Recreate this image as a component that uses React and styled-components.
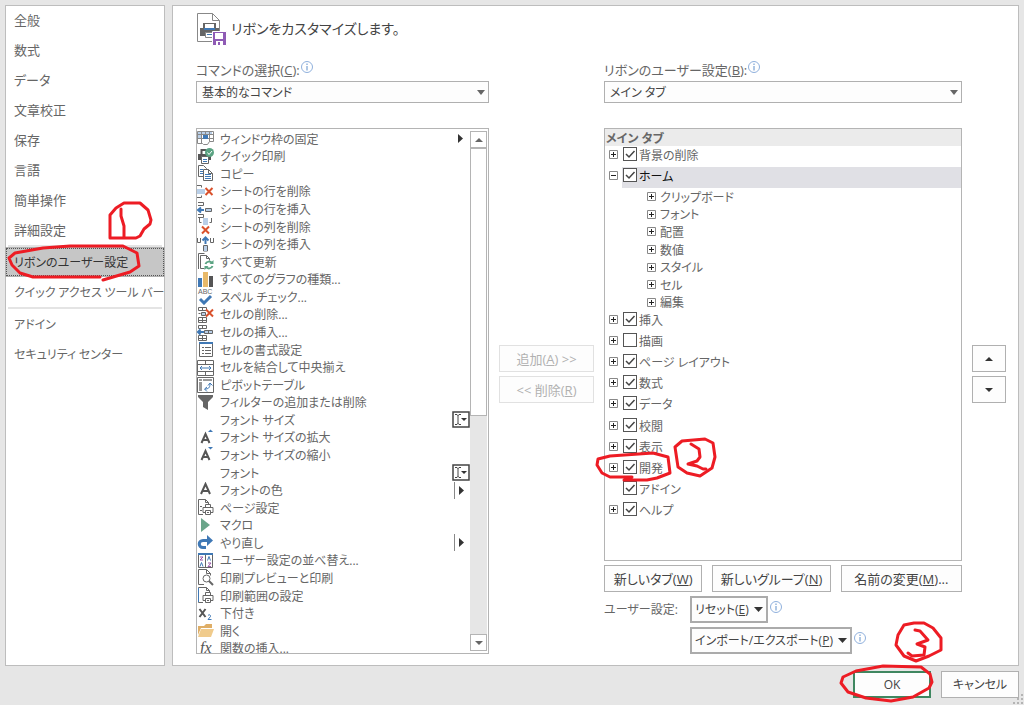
import React, { useState } from "react";
import styled, { createGlobalStyle, css } from "styled-components";

const GlobalStyle = createGlobalStyle`
  *, *::before, *::after { box-sizing: border-box; }
  body {
    margin: 0;
    background: #e6e6e6;
    font-family: "Open Sans", "Noto Sans CJK JP", sans-serif;
    font-feature-settings: "palt";
    font-size: 12px;
    line-height: 18px;
    color: #666;
  }
  button, input, select { font: inherit; font-feature-settings: inherit; color: inherit; margin: 0; }
  ul { list-style: none; margin: 0; padding: 0; }
`;

const Dialog = styled.div`
  position: relative;
  display: flex;
  flex-direction: column;
  min-height: 100vh;
  padding: 5px 5px 0;
  background: #e6e6e6;
`;
const Body = styled.div`
  display: flex;
  flex: 1;
  gap: 7px;
`;
const Nav = styled.nav`
  flex: none;
  width: 160px;
  background: #fff;
  box-shadow: inset 0 0 0 1px #bdbdbd;
  font-family: "Noto Sans CJK JP", sans-serif;
`;
const NavGroup = styled.div`
  font-size: ${(p) => (p.$main ? 13 : 12)}px;
`;
const NavItem = styled.button`
  display: block;
  width: 100%;
  height: 30px;
  padding: 0 0 0 9px;
  border: 0;
  background: none;
  text-align: left;
  white-space: nowrap;
  ${(p) => p.$active && css`
    background: #c6c6c6;
    color: #333;
    outline: 1px dotted #555;
    outline-offset: -2px;
    box-shadow: inset 0 0 0 1px #b0b0b0;
  `}
`;
const NavDivider = styled.hr`
  height: 2px;
  margin: 0 3px;
  border: 0;
  background: #e4e4e4;
`;
const Main = styled.main`
  flex: 1;
  min-width: 0;
  padding: 0 12px 11px 23px;
  border: 1px solid #bdbdbd;
  background: #fff;
`;
const Heading = styled.h1`
  display: flex;
  align-items: center;
  gap: 3px;
  height: 46px;
  margin: 0 0 6px;
  font-size: 14px;
  font-weight: 400;
  line-height: 24px;
  color: #444;
`;
const Columns = styled.div`
  display: grid;
  grid-template-columns: minmax(0, 293fr) 95px minmax(0, 358fr) 34px;
  gap: 10px;
`;
const Column = styled.section`
  display: flex;
  flex-direction: column;
`;
const ButtonStack = styled.div`
  display: flex;
  flex-direction: column;
  gap: 4px;
  padding-top: 287px;
`;
const FieldLabel = styled.div`
  display: flex;
  align-items: center;
  gap: 1px;
  height: 23px;
  font-size: 13px;
  white-space: nowrap;
  svg { margin-bottom: 6px; }
`;
const SelectBox = styled.div`
  display: grid;
  align-items: center;
  margin-bottom: 25px;
  select {
    grid-area: 1 / 1;
    appearance: none;
    width: 100%;
    height: 22px;
    padding: 2px 20px 0 5px;
    border: 1px solid #b0b0b0;
    border-radius: 0;
    background: #fdfdfd;
    color: #444;
  }
  svg { grid-area: 1 / 1; justify-self: end; margin-right: 4px; pointer-events: none; }
`;
const ListBox = styled.div`
  display: flex;
  height: 526px;
  border: 1px solid #b4b4b4;
  overflow: hidden;
`;
const CommandList = styled.ul`
  flex: 1;
  display: grid;
  grid-auto-rows: 1fr;
  height: 528px;
  padding-top: 1px;
`;
const CommandRow = styled.li`
  display: flex;
  align-items: center;
  gap: 6px;
  min-height: 0;
  white-space: nowrap;
  > svg { flex: none; }
`;
const CommandName = styled.span`
  flex: 1;
  padding-top: 2px;
  line-height: 16px;
`;
const ScrollBar = styled.div`
  display: flex;
  flex-direction: column;
  flex: none;
  width: 18px;
  padding: 2px 1px 2px 0;
`;
const ScrollTrack = styled.div`
  flex: 1;
  background: #e6e6e6;
`;
const ScrollThumb = styled.div`
  height: 268px;
  border: 1px solid #b4b4b4;
  background: #fff;
`;
const ScrollButton = styled.button`
  display: grid;
  place-items: center;
  height: 17px;
  padding: 0;
  border: 1px solid #b4b4b4;
  background: #fff;
`;
const Button = styled.button`
  display: flex;
  align-items: center;
  justify-content: center;
  height: 27px;
  padding: 0;
  border: 1px solid #b0b0b0;
  background: #fdfdfd;
  color: #444;
  font-size: 13px;
  white-space: nowrap;
  ${(p) => p.$menu && css`
    gap: 5px;
    padding: 0 3px;
    border: 2px solid #ababab;
    font-size: 12px;
  `}
  ${(p) => p.$dialog && css`
    width: 78px;
    font-size: 12px;
  `}
  ${(p) => p.$primary && css`
    border: 2px solid #3f8760;
  `}
  &:disabled {
    border-color: #e1e1e1;
    color: #b1b1b1;
  }
`;
const Tree = styled.div`
  flex: 1;
  border: 1px solid #b4b4b4;
`;
const TreeHeader = styled.div`
  height: 17px;
  padding-left: 1px;
  background: #ebebeb;
  font-weight: 700;
  line-height: 20px;
`;
const TreeGroup = styled.ul`
  display: grid;
  grid-auto-rows: 1fr;
  height: ${(p) => p.$height}px;
  padding-left: ${(p) => (p.$nested ? 42 : 4)}px;
`;
const TreeRow = styled.li`
  display: flex;
  align-items: ${(p) => (p.$nested ? "center" : "start")};
  gap: 4px;
  min-height: 0;
  white-space: nowrap;
`;
const NestedName = styled.span`
  padding-top: 2px;
  line-height: 16px;
`;
const Expander = styled.button`
  flex: none;
  width: 9px;
  height: 9px;
  margin-top: ${(p) => (p.$nested ? 0 : 4)}px;
  padding: 0;
  border: 0;
  background: none;
  visibility: ${(p) => (p.$hidden ? "hidden" : "visible")};
  svg { display: block; }
`;
const TreeLabel = styled.label`
  display: flex;
  flex: 1;
  align-items: start;
  gap: 2px;
  height: 21px;
  padding: 1px 0 0 1px;
  line-height: 18px;
  ${(p) => p.$selected && css`
    background: #e0e0e5;
    color: #111;
  `}
`;
const CheckMark = styled.span`
  display: grid;
  flex: none;
  input {
    grid-area: 1 / 1;
    appearance: none;
    width: 14px;
    height: 14px;
    border: 1px solid #555;
    background: #fff;
  }
  svg { grid-area: 1 / 1; visibility: hidden; pointer-events: none; }
  input:checked + svg { visibility: visible; }
`;
const ActionRow = styled.div`
  display: grid;
  grid-template-columns: 98fr 118fr 121fr;
  gap: 10px;
  margin: 4px 0;
`;
const SettingsGrid = styled.div`
  display: grid;
  grid-template-columns: 86px 1fr;
  row-gap: 4px;
  align-items: center;
`;
const MenuSlot = styled.div`
  grid-column: 2;
  display: flex;
  gap: 2px;
  > svg { margin-top: 5px; }
`;
const Footer = styled.footer`
  display: flex;
  justify-content: flex-end;
  gap: 10px;
  padding: 5px 0 7px;
`;
const Grip = styled.svg`
  position: absolute;
  right: 0;
  bottom: 0;
`;
const Ink = styled.svg`
  position: absolute;
  top: 0;
  left: 0;
  pointer-events: none;
  fill: none;
  stroke: #ed1c24;
  stroke-width: 3;
  stroke-linejoin: round;
  stroke-linecap: round;
`;

const G = "#666";
const B = "#3f78b5";
const L = "#b9cfe8";
const R = "#d9512c";

const Glyph = ({ children }) => (
  <svg width="17" height="17" viewBox="0 0 17 17" fill="none" stroke={G} aria-hidden="true">{children}</svg>
);
const Cross = ({ x, y }) => <path d={`M${x} ${y}l7 7m0 -7l-7 7`} stroke={R} strokeWidth="2" />;
const Printer = ({ x = 0, y = 0 }) => (
  <g transform={`translate(${x} ${y})`}>
    <path d="M3.5 4.5v-3h5v3" fill="#fff" />
    <path d="M1 4.5h10v5h-10z" fill="#fff" />
    <path d="M3.5 7.5h5v4h-5z" fill="#fff" />
    <path d="M5 9.5h2" />
  </g>
);

const icons = {
  freeze: (
    <Glyph>
      <path d="M1 2h14v2h-14zM1 5h3v3h-3z" fill={L} stroke="none" />
      <path d="M.5 1.5h16v10h-4l-2 3h-4l-1 -1h-5zM.5 4.5h16M.5 8.5h16M4.5 1.5v12M8.5 1.5v3M12.5 1.5v10" stroke="#888" />
      <path d="M6 5h5v4h-5z" fill={B} stroke="none" />
    </Glyph>
  ),
  quickPrint: (
    <Glyph>
      <path d="M4.5 6v-4h5" stroke="#555" strokeWidth="2" />
      <path d="M1 6h13v6h-13z" fill="#555" stroke="none" />
      <path d="M4.5 8.5h7v7h-7z" fill="#fff" />
      <path d="M6 11.5h4M6 13.5h4" stroke={B} />
      <circle cx="12.500" cy="4.500" r="4.500" fill="#5aa382" stroke="none" />
      <path d="M10.500 4.500l1.500 2l3 -3.500" stroke="#fff" />
    </Glyph>
  ),
  copy: (
    <Glyph>
      <path d="M1.500 .5h5l3 3v8h-8z" fill="#fff" />
      <path d="M3 4.500h3M3 6.500h3M3 8.500h3" stroke={B} />
      <path d="M6.500 4.500h5l4 4v7h-9z" fill="#fff" />
      <path d="M11.500 4.500v4h4" />
      <path d="M8 9.500h6M8 11.500h6M8 13.500h6" stroke={B} />
    </Glyph>
  ),
  rowDelete: (
    <Glyph>
      <path d="M0 2.500h4.500v2M0 14.500h4.500v-2" />
      <path d="M0 6h8v5h-8z" fill={L} stroke="none" />
      <Cross x={8.5} y={5} />
    </Glyph>
  ),
  rowInsert: (
    <Glyph>
      <path d="M1 1.500h5.500v3h-5.500M1 13.500h5.500v3h-5.500" />
      <path d="M8.500 7.500h6v3h-6z" fill={L} />
      <path d="M1 9h6M4 6.500l-3 2.500l3 2.500" stroke={B} strokeWidth="2" />
    </Glyph>
  ),
  colDelete: (
    <Glyph>
      <path d="M2.500 0v4.500h2M14.500 0v4.500h-2" />
      <path d="M6 0h5v7h-5z" fill={L} stroke="none" />
      <Cross x={5} y={8.5} />
    </Glyph>
  ),
  colInsert: (
    <Glyph>
      <path d="M.5 2v4.500h3v-4.500M13.500 2v4.500h3v-4.500M6.500 15v-5.500h4v5.500z" />
      <path d="M7 10h3v5h-3z" fill={L} stroke="none" />
      <path d="M8.500 8v-6M5.500 4.500l3 -3l3 3" stroke={B} strokeWidth="2" />
    </Glyph>
  ),
  refresh: (
    <Glyph>
      <path d="M1.500 16v-15.500h6M3.500 15.500v-13h6l3 3v2M9.500 2.500v3h3M3.500 15.500h4" />
      <path d="M8.500 11c1 -3 5 -3 6.500 -1M15.500 13c-1 3 -5 3 -6.500 1" stroke="#5aa382" strokeWidth="2" />
      <path d="M16.500 7v4h-4zM7.500 17v-4h4z" fill="#5aa382" stroke="none" />
    </Glyph>
  ),
  chart: (
    <Glyph>
      <path d="M1 7h4v9h-4z" fill={B} stroke="none" />
      <path d="M6 1h5v15h-5z" fill="#e8b96a" stroke="none" />
      <path d="M12 5h4v11h-4z" fill="#555" stroke="none" />
    </Glyph>
  ),
  spell: (
    <Glyph>
      <text x="1" y="6" fontSize="7" fill={G} stroke="none" fontFamily="Liberation Sans">ABC</text>
      <path d="M3 11l4 4l7 -7" stroke={B} strokeWidth="3" />
    </Glyph>
  ),
  cellDelete: (
    <Glyph>
      <path d="M1.500 1.500h8v3h-8zM5.500 1.500v3M1.500 11.500h8v5h-8zM5.500 11.500v5M1.500 14.500h8M1.500 7.500h2" />
      <path d="M4.500 6.500h4v3h-4z" fill={L} />
      <Cross x={9} y={3.500} />
    </Glyph>
  ),
  cellInsert: (
    <Glyph>
      <path d="M1.500 1.500h8v3h-8zM5.500 1.500v3M1.500 11.500h8v5h-8zM5.500 11.500v5M1.500 14.500h8" />
      <path d="M7.500 6.500h8v3h-8zM11.500 6.500v3" fill={L} />
      <path d="M1 8h6M3.500 5.500l-2.500 2.500l2.500 2.500" stroke={B} strokeWidth="2" />
    </Glyph>
  ),
  cellFormat: (
    <Glyph>
      <path d="M2.500 1.500h13v14h-13z" fill="#fff" />
      <path d="M2 1h14v2h-14z" fill={B} stroke="none" />
      <path d="M5 6.500h2M5 9.500h2M5 12.500h2M8 6.500h6M8 9.500h6M8 12.500h6" />
    </Glyph>
  ),
  merge: (
    <Glyph>
      <path d="M.5 1.500h16v15h-16zM.5 5.500h16M.5 12.500h16M8.500 1.500v4M8.500 12.500v4" />
      <path d="M3 9h11M5 7l-2 2l2 2M12 7l2 2l-2 2" stroke={B} />
    </Glyph>
  ),
  pivot: (
    <Glyph>
      <path d="M.5 1.500h16v15h-16z" />
      <path d="M2 3h3v2h-3zM6 3h9v2h-9zM2 6h3v9h-3z" fill="#999" stroke="none" />
      <path d="M8 13c3 0 5 -1 5 -5M10 11l-2.500 2l2.500 2.500M11 9.500l2 -2.500l2.500 2.500" stroke={B} />
    </Glyph>
  ),
  filter: <Glyph><path d="M1 1h15v2l-5 5v8l-5 -3v-5l-5 -5z" fill={G} stroke="none" /></Glyph>,
  blank: <Glyph />,
  grow: (
    <Glyph>
      <path d="M4.500 14l4 -9l4 9M6 11h5" stroke="#555" strokeWidth="2" />
      <path d="M11 3h5l-2.500 -2.500z" fill={B} stroke="none" />
    </Glyph>
  ),
  shrink: (
    <Glyph>
      <path d="M4.500 14l4 -9l4 9M6 11h5" stroke="#555" strokeWidth="2" />
      <path d="M11 1h5l-2.500 2.500z" fill={B} stroke="none" />
    </Glyph>
  ),
  fontColor: (
    <Glyph><path d="M4 12l4.500 -10l4.500 10M5.500 9h6" stroke="#555" strokeWidth="2" /></Glyph>
  ),
  pageSetup: (
    <Glyph>
      <path d="M6 15.500h-4.500v-15h7l3 3v2M8.500 .5v3h3M3 7.500h2M3 11.500h2" />
      <Printer x={5} y={4} />
    </Glyph>
  ),
  macro: <Glyph><path d="M4 1l9 7l-9 7z" fill="#6aa58a" stroke="none" /></Glyph>,
  redo: (
    <Glyph>
      <path d="M11 6.500h-5c-5 0 -5 7 0 7h3" stroke={B} strokeWidth="3" />
      <path d="M10 1l6 5.500l-6 5.500z" fill={B} stroke="none" />
    </Glyph>
  ),
  sort: (
    <Glyph>
      <path d="M1.500 1.500h14v14h-14zM8.500 1.500v14" />
      <path d="M1 1h15v2h-15z" fill={B} stroke="none" />
      <path d="M3 5h3l-3 3h3M11 11h3l-3 3.500h3" stroke="#9b59a8" />
      <path d="M3 14.500l1.500 -4l1.500 4M10.500 8.500l1.500 -4l1.500 4" stroke={B} />
    </Glyph>
  ),
  preview: (
    <Glyph>
      <path d="M7 15.500h-5.500v-15h8l4 4v2M9.500 .5v4h4" />
      <circle cx="9.500" cy="9.500" r="3.500" fill="#fff" />
      <path d="M12 12l4 4" strokeWidth="2" />
    </Glyph>
  ),
  printArea: (
    <Glyph>
      <path d="M6 15.500h-4.500v-15h8l3 3v2M9.500 .5v3h3" />
      <path d="M1.500 1v14" stroke={B} />
      <Printer x={5} y={4} />
    </Glyph>
  ),
  subscript: (
    <Glyph>
      <path d="M2.500 4l6 8M8.500 4l-6 8" stroke="#555" strokeWidth="2" />
      <path d="M11 10.500c1 -1.500 3 -.5 2.500 1l-2.500 3h3.500" stroke={B} />
    </Glyph>
  ),
  open: (
    <Glyph>
      <path d="M1 13v-9h6l2 -2h6v4h-11z" fill="#dfae66" stroke="none" />
      <path d="M4 7h13l-3 8h-13z" fill="#f0cb8c" stroke="none" />
    </Glyph>
  ),
  fx: (
    <Glyph>
      <text x="3" y="13" fontSize="16" fontStyle="italic" fill="#555" stroke="none" fontFamily="Liberation Serif">fx</text>
    </Glyph>
  ),
};

const Triangle = ({ up, w = 8, h = 5, color = "#666" }) => (
  <svg width={w} height={h} viewBox="0 0 8 5" preserveAspectRatio="none" aria-hidden="true">
    <path d={up ? "M0 5l4 -5l4 5z" : "M0 0h8l-4 5z"} fill={color} />
  </svg>
);
const Trailing = ({ kind }) => (
  <svg width="20" height="17" viewBox="0 0 20 17" fill="none" aria-hidden="true">
    {kind === "menu" && <path d="M8 4l5 4.500l-5 4.500z" fill="#333" />}
    {kind === "split" && (
      <>
        <path d="M4.500 0v17" stroke="#888" />
        <path d="M9 4l5 4.500l-5 4.500z" fill="#333" />
      </>
    )}
    {kind === "combo" && (
      <>
        <path d="M3 1h16v15h-16z" stroke="#444" strokeWidth="1.500" fill="#fff" />
        <path d="M5 3.500h2l1 1l1 -1h2M8 4v9M5 13.500h2l1 -1l1 1h2" stroke="#444" />
        <path d="M11 7h6l-3 3z" fill="#333" />
      </>
    )}
  </svg>
);
const Info = () => (
  <svg width="12" height="12" viewBox="0 0 12 12" fill="none" stroke="#8fb0dc" aria-hidden="true">
    <circle cx="6" cy="6" r="5.500" />
    <path d="M6 2.500v1.500M6 5v4.500" stroke="#5f8fca" />
  </svg>
);
const RibbonIcon = () => (
  <svg width="32" height="34" viewBox="0 0 32 34" fill="none" aria-hidden="true">
    <path d="M1.500 1.500h15l7 7v21h-22z" fill="#fff" stroke="#888" />
    <path d="M16.500 1.500v7h7" stroke="#888" />
    <path d="M4 16h3v-5h13v5h3v8h-19z" fill="#666" />
    <path d="M9 12h9v4h-9z" fill="#fff" />
    <path d="M8 16h11v2h-11z" fill={B} />
    <path d="M9.500 20.500h8v5h-8z" fill="#fff" stroke="#888" />
    <path d="M11 22.500h5" stroke={B} />
    <path d="M16.500 19.500h14v14h-14z" fill="#8f5bb5" stroke="#fff" />
    <path d="M19 21h8v6h-8zM20 29h7v4h-7z" fill="#fff" />
    <path d="M22 30h2v3h-2z" fill="#8f5bb5" />
  </svg>
);

const commands = [
  ["freeze", "ウィンドウ枠の固定", "menu"],
  ["quickPrint", "クイック印刷"],
  ["copy", "コピー"],
  ["rowDelete", "シートの行を削除"],
  ["rowInsert", "シートの行を挿入"],
  ["colDelete", "シートの列を削除"],
  ["colInsert", "シートの列を挿入"],
  ["refresh", "すべて更新"],
  ["chart", "すべてのグラフの種類..."],
  ["spell", "スペル チェック..."],
  ["cellDelete", "セルの削除..."],
  ["cellInsert", "セルの挿入..."],
  ["cellFormat", "セルの書式設定"],
  ["merge", "セルを結合して中央揃え"],
  ["pivot", "ピボットテーブル"],
  ["filter", "フィルターの追加または削除"],
  ["blank", "フォント サイズ", "combo"],
  ["grow", "フォント サイズの拡大"],
  ["shrink", "フォント サイズの縮小"],
  ["blank", "フォント", "combo"],
  ["fontColor", "フォントの色", "split"],
  ["pageSetup", "ページ設定"],
  ["macro", "マクロ"],
  ["redo", "やり直し", "split"],
  ["sort", "ユーザー設定の並べ替え..."],
  ["preview", "印刷プレビューと印刷"],
  ["printArea", "印刷範囲の設定"],
  ["subscript", "下付き"],
  ["open", "開く"],
  ["fx", "関数の挿入..."],
];

const navGroups = [
  ["全般", "数式", "データ", "文章校正", "保存", "言語", "簡単操作", "詳細設定"],
  ["リボンのユーザー設定", "クイック アクセス ツール バー"],
  ["アドイン", "セキュリティ センター"],
];

const ExpandButton = ({ open, hidden, nested, name }) => (
  <Expander type="button" $hidden={hidden} $nested={nested} aria-label={name}>
    <svg width="9" height="9" viewBox="0 0 9 9" fill="none">
      <path d="M.5 .5h8v8h-8z" stroke="#888" />
      <path d={open ? "M2 4.500h5" : "M2 4.500h5M4.500 2v5"} stroke="#222" />
    </svg>
  </Expander>
);

const TabItem = ({ name, checked = true, open, selected, leaf }) => {
  const [on, setOn] = useState(checked);
  return (
    <TreeRow>
      <ExpandButton open={open} hidden={leaf} name={name} />
      <TreeLabel $selected={selected}>
        <CheckMark>
          <input type="checkbox" checked={on} onChange={() => setOn(!on)} />
          <svg width="14" height="14" viewBox="0 0 14 14" fill="none" stroke="#444" strokeWidth="1.500">
            <path d="M3 7l3 3l5.500 -6" />
          </svg>
        </CheckMark>
        {name}
      </TreeLabel>
    </TreeRow>
  );
};

export default function App() {
  const [page, setPage] = useState("リボンのユーザー設定");
  return (
    <Dialog>
      <GlobalStyle />
      <Body>
        <Nav>
          {navGroups.map((group, i) => (
            <React.Fragment key={group[0]}>
              {i > 0 && <NavDivider />}
              <NavGroup $main={i === 0}>
                {group.map((name) => (
                  <NavItem key={name} type="button" $active={name === page} onClick={() => setPage(name)}>
                    {name}
                  </NavItem>
                ))}
              </NavGroup>
            </React.Fragment>
          ))}
        </Nav>
        <Main>
          <Heading><RibbonIcon />リボンをカスタマイズします。</Heading>
          <Columns>
            <Column>
              <FieldLabel>
                <label htmlFor="source">コマンドの選択(<u>C</u>):</label>
                <Info />
              </FieldLabel>
              <SelectBox>
                <select id="source"><option>基本的なコマンド</option></select>
                <Triangle />
              </SelectBox>
              <ListBox>
                <CommandList>
                  {commands.map(([icon, name, kind]) => (
                    <CommandRow key={name}>
                      {icons[icon]}
                      <CommandName>{name}</CommandName>
                      {kind && <Trailing kind={kind} />}
                    </CommandRow>
                  ))}
                </CommandList>
                <ScrollBar>
                  <ScrollButton type="button" aria-label="上へスクロール"><Triangle up h={4} /></ScrollButton>
                  <ScrollTrack><ScrollThumb /></ScrollTrack>
                  <ScrollButton type="button" aria-label="下へスクロール"><Triangle h={4} /></ScrollButton>
                </ScrollBar>
              </ListBox>
            </Column>
            <ButtonStack>
              <Button type="button" disabled><span>追加(<u>A</u>) &gt;&gt;</span></Button>
              <Button type="button" disabled><span>&lt;&lt; 削除(<u>R</u>)</span></Button>
            </ButtonStack>
            <Column>
              <FieldLabel>
                <label htmlFor="target">リボンのユーザー設定(<u>B</u>):</label>
                <Info />
              </FieldLabel>
              <SelectBox>
                <select id="target"><option>メイン タブ</option></select>
                <Triangle />
              </SelectBox>
              <Tree>
                <TreeHeader>メイン タブ</TreeHeader>
                <TreeGroup $height={42}>
                  <TabItem name="背景の削除" />
                  <TabItem name="ホーム" open selected />
                </TreeGroup>
                <TreeGroup $height={123} $nested>
                  {["クリップボード", "フォント", "配置", "数値", "スタイル", "セル", "編集"].map((name) => (
                    <TreeRow key={name} $nested>
                      <ExpandButton nested name={name} />
                      <NestedName>{name}</NestedName>
                    </TreeRow>
                  ))}
                </TreeGroup>
                <TreeGroup $height={211}>
                  <TabItem name="挿入" />
                  <TabItem name="描画" checked={false} />
                  <TabItem name="ページ レイアウト" />
                  <TabItem name="数式" />
                  <TabItem name="データ" />
                  <TabItem name="校閲" />
                  <TabItem name="表示" />
                  <TabItem name="開発" />
                  <TabItem name="アドイン" leaf />
                  <TabItem name="ヘルプ" />
                </TreeGroup>
              </Tree>
              <ActionRow>
                <Button type="button"><span>新しいタブ(<u>W</u>)</span></Button>
                <Button type="button"><span>新しいグループ(<u>N</u>)</span></Button>
                <Button type="button"><span>名前の変更(<u>M</u>)...</span></Button>
              </ActionRow>
              <SettingsGrid>
                <span>ユーザー設定:</span>
                <MenuSlot>
                  <Button type="button" $menu><span>リセット(<u>E</u>)</span><Triangle w={9} color="#333" /></Button>
                  <Info />
                </MenuSlot>
                <MenuSlot>
                  <Button type="button" $menu><span>インポート/エクスポート(<u>P</u>)</span><Triangle w={9} color="#333" /></Button>
                  <Info />
                </MenuSlot>
              </SettingsGrid>
            </Column>
            <ButtonStack>
              <Button type="button" aria-label="上へ"><Triangle up w={8} h={4} color="#333" /></Button>
              <Button type="button" aria-label="下へ"><Triangle w={8} h={4} color="#333" /></Button>
            </ButtonStack>
          </Columns>
        </Main>
      </Body>
      <Footer>
        <Button type="button" $dialog $primary>OK</Button>
        <Button type="button" $dialog>キャンセル</Button>
      </Footer>
      <Grip width="11" height="11" viewBox="0 0 11 11" fill="#b4b4b4" aria-hidden="true">
        <path d="M8 0h2v2h-2zM4 4h2v2h-2zM8 4h2v2h-2zM0 8h2v2h-2zM4 8h2v2h-2zM8 8h2v2h-2z" />
      </Grip>
      <Ink width="1024" height="705" viewBox="0 0 1024 705" aria-hidden="true">
        <path d="M110 238V215L116 208L124 203H140L148 210L151 220L150 224L144 229L140 236L136 238Z" />
        <path d="M121 209V216L124 226V237" />
        <path d="M100 277H33L20 273L12 265L9 258L15 253L43 248L70 246H123L137 253L139 266L130 272L103 280" />
        <path d="M632 477H610L602 473L597 465L598 459L610 456L653 453L668 457L670 473L657 478L647 480H624" />
        <path d="M675 447L682 441L705 439L713 443L715 457L712 468L700 476L687 473L678 467Z" />
        <path d="M691 444L699 449L700 457L697 461L688 464L697 466L703 469H706" />
        <path d="M898 635L904 625L914 623H924L933 628L941 638V650L929 656L916 661L904 656L896 645Z" />
        <path d="M915 630L920 631L928 640L917 644L925 647L924 655L912 656L908 653" />
        <path d="M921 667L883 666L856 671L843 677L841 683L848 692L866 698L891 701L913 697L929 688L932 682L930 674Z" />
      </Ink>
    </Dialog>
  );
}
